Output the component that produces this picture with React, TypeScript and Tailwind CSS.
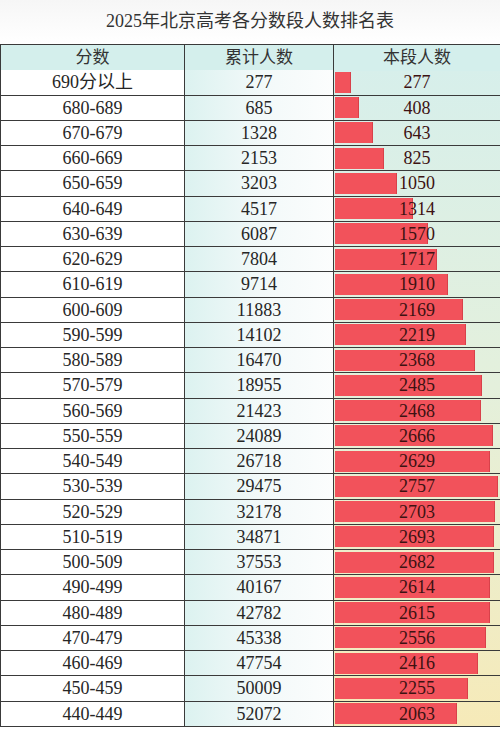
import React from 'react';

const rows: [string, number, number][] = [
    ['690分以上', 277, 277],
    ['680-689', 685, 408],
    ['670-679', 1328, 643],
    ['660-669', 2153, 825],
    ['650-659', 3203, 1050],
    ['640-649', 4517, 1314],
    ['630-639', 6087, 1570],
    ['620-629', 7804, 1717],
    ['610-619', 9714, 1910],
    ['600-609', 11883, 2169],
    ['590-599', 14102, 2219],
    ['580-589', 16470, 2368],
    ['570-579', 18955, 2485],
    ['560-569', 21423, 2468],
    ['550-559', 24089, 2666],
    ['540-549', 26718, 2629],
    ['530-539', 29475, 2757],
    ['520-529', 32178, 2703],
    ['510-519', 34871, 2693],
    ['500-509', 37553, 2682],
    ['490-499', 40167, 2614],
    ['480-489', 42782, 2615],
    ['470-479', 45338, 2556],
    ['460-469', 47754, 2416],
    ['450-459', 50009, 2255],
    ['440-449', 52072, 2063],
];

const MAX = 2757;
const BAR_FULL = 163;

const App = () => {
    return (
        <div
            className="w-[500px] h-[730px] overflow-hidden bg-white text-[#262626]"
            style={{ fontFamily: '"Liberation Serif", "Noto Sans CJK SC", serif' }}
        >
            {/* 标题 */}
            <div className="h-[45px] flex items-center justify-center pb-[2px] border-b border-[#3a3a3a] bg-gradient-to-b from-[#f6f6f6] to-white text-[18px] text-[#333]">
                2025年北京高考各分数段人数排名表
            </div>

            <div className="border-l border-[#3a3a3a] bg-gradient-to-b from-[#d6efec] via-[#e4f0dc] to-[#f6eab8]">
                {/* 表头 */}
                <div className="grid grid-cols-[184px_149px_1fr] h-[25.25px] border-b border-[#3a3a3a] text-[17px] text-[#333]">
                    <div className="flex items-center justify-center bg-[#d4efec] border-r border-[#3a3a3a]">分数</div>
                    <div className="flex items-center justify-center bg-[#d4efec] border-r border-[#3a3a3a]">累计人数</div>
                    <div className="flex items-center justify-center bg-[#d4efec]">本段人数</div>
                </div>

                {rows.map(([range, total, count]) => (
                    <div
                        key={range}
                        className="grid grid-cols-[184px_149px_1fr] h-[25.25px] border-b border-[#3a3a3a] text-[18px] leading-none"
                    >
                        <div className="flex items-center justify-center bg-white border-r border-[#3a3a3a]">
                            {range}
                        </div>
                        <div className="flex items-center justify-center bg-gradient-to-r from-[#dcf2f0] via-[#f2f9f9] to-[#fcfdfd] border-r border-[#3a3a3a]">
                            {total}
                        </div>
                        <div className="grid items-center">
                            <div className="col-start-1 row-start-1 h-[21px] pl-[1px]">
                                <div
                                    className="h-full bg-[#f2525b] border-r border-[#d8414a]"
                                    style={{ width: `${(count / MAX) * BAR_FULL}px` }}
                                />
                            </div>
                            <div className="col-start-1 row-start-1 text-center text-[#3d1212]">{count}</div>
                        </div>
                    </div>
                ))}
            </div>
        </div>
    );
};

export default App;
